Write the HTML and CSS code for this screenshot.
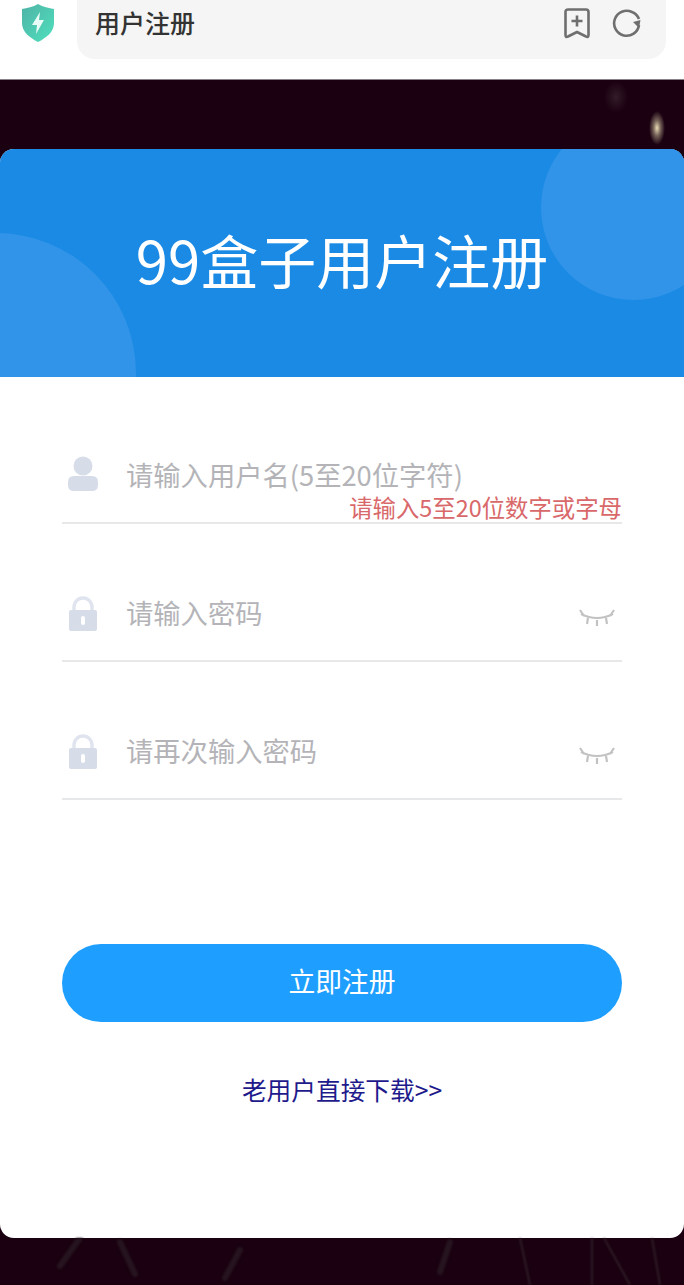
FILE: index.html
```html
<!DOCTYPE html>
<html lang="zh-CN">
<head>
  <meta charset="UTF-8">
  <title>用户注册</title>
  <link rel="stylesheet" href="styles.css">
</head>
<body>
<div class="topbar">
  <svg class="shield" width="34" height="38" viewBox="0 0 34 38">
    <defs>
      <linearGradient id="sh" x1="0" y1="0" x2="1" y2="1">
        <stop offset="0" stop-color="#4fb3a6"/>
        <stop offset="1" stop-color="#4fe0bd"/>
      </linearGradient>
    </defs>
    <path d="M17 0 C22 3 28 4 33 5 L33 19 C33 28 25 34 17 38 C9 34 1 28 1 19 L1 5 C6 4 12 3 17 0 Z" fill="url(#sh)"/>
    <path d="M19 8 L11 21 L16 21 L15 30 L23 16 L18 16 Z" fill="#e9fbf6"/>
  </svg>
  <div class="address">
    <span class="address-title">用户注册</span>
    <svg class="bar-icon" width="26" height="31" viewBox="0 0 26 31" fill="none" stroke="#6f6f6f" stroke-width="2.6">
      <path d="M4 1.500 H22 Q24.500 1.500 24.500 4 V27 Q24.500 30 22 28.500 L13 24 L4 28.500 Q1.500 30 1.500 27 V4 Q1.500 1.500 4 1.500 Z" stroke-linejoin="round"/>
      <path d="M7.500 13 H18.500 M13 7.500 V18.500"/>
    </svg>
    <svg class="bar-icon" width="30" height="30" viewBox="0 0 30 30" fill="none" stroke="#6f6f6f" stroke-width="2.6">
      <path d="M27 17 A12.5 12.5 0 1 1 20 4 Q25 6 27 11"/>
      <path d="M21 14 L28.500 12 L27 20 Z" fill="#6f6f6f" stroke="none"/>
    </svg>
  </div>
</div>

<div class="page">
  <div class="card">
    <div class="card-head">
      <i class="bubble bubble-left"></i>
      <i class="bubble bubble-right"></i>
      <h1>99盒子用户注册</h1>
    </div>
    <div class="form">
      <div class="row">
        <svg class="row-icon" width="32" height="36" viewBox="0 0 32 36" fill="#d6dde9">
          <circle cx="16" cy="10" r="9.5"/>
          <path d="M7 20 H25 Q31 20 31 26 V29 Q31 35 25 35 H7 Q1 35 1 29 V26 Q1 20 7 20 Z"/>
        </svg>
        <span class="hint-text">请输入用户名(5至20位字符)</span>
        <span class="error">请输入5至20位数字或字母</span>
      </div>
      <div class="row">
        <svg class="row-icon lock" width="30" height="36" viewBox="0 0 30 36">
          <path d="M6 16 V11 A9 9 0 0 1 24 11 V16" fill="none" stroke="#dfe4ee" stroke-width="3.4"/>
          <rect x="1" y="14" width="28" height="21" rx="2" fill="#d6dde9"/>
          <rect x="13" y="20" width="4" height="9" rx="2" fill="#fff"/>
        </svg>
        <span class="hint-text">请输入密码</span>
        <svg class="eye" width="38" height="20" viewBox="0 0 38 20" fill="none" stroke="#c2c2c2" stroke-width="2.2">
          <path d="M3 6 Q19 14 35 6 M2 2 L6 8 M36 2 L32 8 M10 10 L9 16 M19 12 V18 M28 10 L29 16"/>
        </svg>
      </div>
      <div class="row">
        <svg class="row-icon lock" width="30" height="36" viewBox="0 0 30 36">
          <path d="M6 16 V11 A9 9 0 0 1 24 11 V16" fill="none" stroke="#dfe4ee" stroke-width="3.4"/>
          <rect x="1" y="14" width="28" height="21" rx="2" fill="#d6dde9"/>
          <rect x="13" y="20" width="4" height="9" rx="2" fill="#fff"/>
        </svg>
        <span class="hint-text">请再次输入密码</span>
        <svg class="eye" width="38" height="20" viewBox="0 0 38 20" fill="none" stroke="#c2c2c2" stroke-width="2.2">
          <path d="M3 6 Q19 14 35 6 M2 2 L6 8 M36 2 L32 8 M10 10 L9 16 M19 12 V18 M28 10 L29 16"/>
        </svg>
      </div>
      <div class="submit">立即注册</div>
      <a class="old-user" href="javascript:void(0)">老用户直接下载&gt;&gt;</a>
    </div>
  </div>
  <svg class="sparks" width="684" height="47" viewBox="0 0 684 47" fill="none" stroke="#3e2e3a" stroke-width="1.2">
    <path d="M520 0 L530 47 M592 0 V47 M604 0 L630 47 M652 0 L660 47"/>
    <path d="M80 0 L60 28 M120 4 L135 36 M240 12 L225 40 M450 4 L440 34" stroke="#261420" stroke-width="6" stroke-linecap="round"/>
  </svg>
</div>
</body>
</html>
```

FILE: styles.css
```css
html, body {
  margin: 0;
  padding: 0;
}
body {
  width: 684px;
  height: 1285px;
  overflow: hidden;
  background: #fff;
  font-family: "Noto Sans CJK SC", "Noto Sans", sans-serif;
}

/* browser bar */
.topbar {
  height: 79px;
  display: flex;
  align-items: flex-start;
  background: #fff;
}
.shield {
  margin: 4px 22px 0 21px;
  filter: blur(0.4px);
}
.address {
  width: 553px;
  height: 59px;
  padding: 0 18px;
  display: flex;
  align-items: center;
  background: #f4f5f4;
  border-radius: 0 0 18px 18px;
}
.address-title {
  flex: 1;
  font-size: 25px;
  font-weight: 500;
  line-height: 48px;
  color: #333;
  margin-bottom: 16px;
}
.bar-icon {
  margin-bottom: 13px;
  margin-left: 22px;
  filter: blur(0.4px);
}
.bar-icon + .bar-icon {
  margin-right: 6px;
  margin-bottom: 14px;
}

/* dark page */
.page {
  position: relative;
  height: 1206px;
  padding-top: 69px;
  box-sizing: border-box;
  border-top: 1px solid #8a8088;
  background:
    radial-gradient(ellipse 8px 17px at 657px 48px, #e8dcb4 0, rgba(232, 220, 180, 0.45) 45%, transparent 100%),
    radial-gradient(ellipse 12px 16px at 616px 17px, rgba(120, 100, 110, 0.28), transparent 100%),
    #1a0010;
}
.sparks {
  position: absolute;
  left: 0;
  bottom: 0;
  filter: blur(1px);
}

.card {
  height: 1089px;
  background: #fff;
  border-radius: 14px;
  overflow: hidden;
}
.card-head {
  position: relative;
  height: 228px;
  overflow: hidden;
  background: #1a8ae5;
  text-align: center;
}
.card-head h1 {
  position: relative;
  margin: -4px 0 0;
  font-size: 58px;
  font-weight: 400;
  line-height: 228px;
  color: #fff;
}
.bubble {
  position: absolute;
  border-radius: 50%;
  background: #3194e8;
}
.bubble-left {
  left: -144px;
  top: 84px;
  width: 280px;
  height: 280px;
}
.bubble-right {
  left: 541px;
  top: -34px;
  width: 185px;
  height: 185px;
}

/* form */
.form {
  padding: 55px 62px 0;
}
.row {
  position: relative;
  height: 92px;
  margin-bottom: 46px;
  box-sizing: border-box;
  border-bottom: 2px solid #e6e8ea;
  display: flex;
  align-items: center;
  padding-bottom: 6px;
}
.row-icon {
  margin-left: 5px;
  width: 32px;
  filter: blur(0.5px);
}
.lock {
  margin-top: 4px;
}
.hint-text {
  flex: 1;
  margin-left: 27px;
  font-size: 27.3px;
  color: #b4b4b8;
}
.eye {
  margin-right: 6px;
  margin-top: 11px;
  filter: blur(0.6px);
}
.error {
  position: absolute;
  right: 0;
  bottom: 0;
  font-size: 23.4px;
  line-height: 30px;
  color: #d9686a;
}
.submit {
  margin-top: 144px;
  height: 78px;
  border-radius: 39px;
  background: #1e9fff;
  color: #fff;
  font-size: 26.8px;
  line-height: 74px;
  text-align: center;
}
.old-user {
  display: block;
  margin-top: 49px;
  font-size: 24.7px;
  line-height: 36px;
  text-align: center;
  color: #1e1a8c;
  text-decoration: none;
}
```
